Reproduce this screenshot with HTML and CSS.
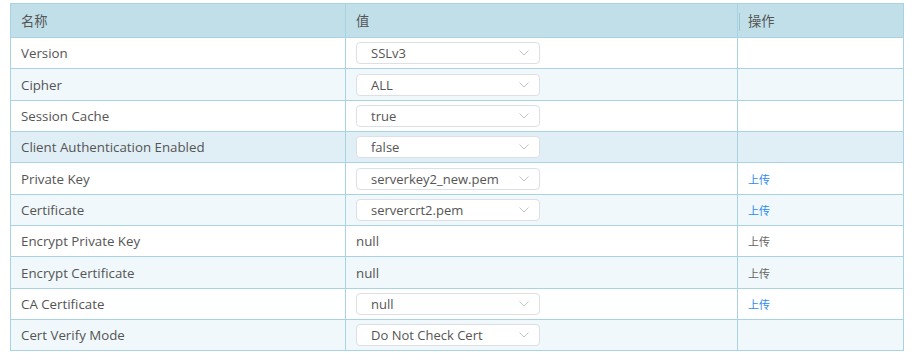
FILE: index.html
```html
<!DOCTYPE html>
<html lang="zh-CN">

<head>
  <meta charset="UTF-8" />
  <title>SSL 配置</title>
  <link rel="stylesheet" href="styles.css">
</head>

<body>
  <div class="page">
    <table class="conf-table">
      <colgroup>
        <col class="col-name">
        <col class="col-value">
        <col class="col-op">
      </colgroup>
      <thead>
        <tr>
          <th>名称</th>
          <th>值</th>
          <th class="th-op"><span class="resize-bar"></span>操作</th>
        </tr>
      </thead>
      <tbody>
        <tr>
          <td>Version</td>
          <td><div class="select"><span>SSLv3</span><svg class="arrow" viewBox="0 0 10 6"><path d="M0.5 0.5 L5 5 L9.5 0.5" /></svg></div></td>
          <td></td>
        </tr>
        <tr>
          <td>Cipher</td>
          <td><div class="select"><span>ALL</span><svg class="arrow" viewBox="0 0 10 6"><path d="M0.5 0.5 L5 5 L9.5 0.5" /></svg></div></td>
          <td></td>
        </tr>
        <tr>
          <td>Session Cache</td>
          <td><div class="select"><span>true</span><svg class="arrow" viewBox="0 0 10 6"><path d="M0.5 0.5 L5 5 L9.5 0.5" /></svg></div></td>
          <td></td>
        </tr>
        <tr class="hover">
          <td>Client Authentication Enabled</td>
          <td><div class="select"><span>false</span><svg class="arrow" viewBox="0 0 10 6"><path d="M0.5 0.5 L5 5 L9.5 0.5" /></svg></div></td>
          <td></td>
        </tr>
        <tr>
          <td>Private Key</td>
          <td><div class="select"><span>serverkey2_new.pem</span><svg class="arrow" viewBox="0 0 10 6"><path d="M0.5 0.5 L5 5 L9.5 0.5" /></svg></div></td>
          <td><a class="upload" href="#">上传</a></td>
        </tr>
        <tr>
          <td>Certificate</td>
          <td><div class="select"><span>servercrt2.pem</span><svg class="arrow" viewBox="0 0 10 6"><path d="M0.5 0.5 L5 5 L9.5 0.5" /></svg></div></td>
          <td><a class="upload" href="#">上传</a></td>
        </tr>
        <tr>
          <td>Encrypt Private Key</td>
          <td>null</td>
          <td><span class="upload disabled">上传</span></td>
        </tr>
        <tr>
          <td>Encrypt Certificate</td>
          <td>null</td>
          <td><span class="upload disabled">上传</span></td>
        </tr>
        <tr>
          <td>CA Certificate</td>
          <td><div class="select"><span>null</span><svg class="arrow" viewBox="0 0 10 6"><path d="M0.5 0.5 L5 5 L9.5 0.5" /></svg></div></td>
          <td><a class="upload" href="#">上传</a></td>
        </tr>
        <tr>
          <td>Cert Verify Mode</td>
          <td><div class="select"><span>Do Not Check Cert</span><svg class="arrow" viewBox="0 0 10 6"><path d="M0.5 0.5 L5 5 L9.5 0.5" /></svg></div></td>
          <td></td>
        </tr>
      </tbody>
    </table>
  </div>
</body>

</html>
```

FILE: styles.css
```css
body {
  margin: 0;
  background: #fff;
  font-family: 'Open Sans', 'Noto Sans CJK SC', sans-serif;
  font-size: 13.3px;
  color: #555;
}

.page {
  padding: 3px 0 0 10px;
}

.conf-table {
  width: 894px;
  border-collapse: collapse;
  table-layout: fixed;
  border: 1px solid #a9d3e3;
}

.col-name {
  width: 335px;
}

.col-value {
  width: 392px;
}

.conf-table th {
  height: 33px;
  padding: 0 10px;
  background: #c1dfe9;
  font-weight: normal;
  text-align: left;
  color: #555;
  border: 1px solid #a9d3e3;
  border-top: 0;
}

.th-op {
  position: relative;
}

.resize-bar {
  position: absolute;
  left: 1px;
  top: 9px;
  width: 1px;
  height: 18px;
  background: #9fc9d9;
}

.conf-table td {
  height: 30.35px;
  padding: 0 10px;
  border: 1px solid #a9d3e3;
  white-space: nowrap;
}

.conf-table tbody tr:nth-child(even) {
  background: #f0f8fb;
}

.conf-table tbody tr.hover {
  background: #e0eff5;
}

.select {
  width: 184px;
  height: 22px;
  box-sizing: border-box;
  border: 1px solid #dcdfe6;
  border-radius: 4px;
  background: #fff;
  display: flex;
  align-items: center;
  justify-content: space-between;
  padding: 0 10px 0 14px;
  font-size: 13px;
}

.arrow {
  width: 10px;
  height: 6px;
  fill: none;
  stroke: #c0c4cc;
  stroke-width: 1;
}

.upload {
  font-size: 11px;
  color: #2d8cf0;
  text-decoration: none;
}

.upload.disabled {
  color: #666;
}
```
